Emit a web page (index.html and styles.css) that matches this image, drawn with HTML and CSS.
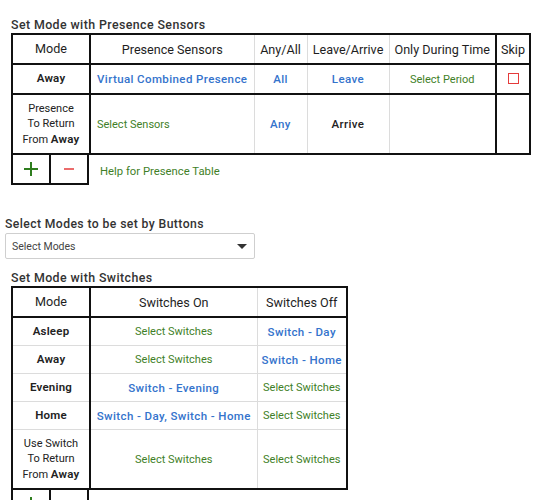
FILE: index.html
```html
<!DOCTYPE html>
<html lang="en">
<head>
  <meta charset="UTF-8">
  <title>Mode Manager</title>
  <link rel="stylesheet" href="styles.css">
</head>
<body>
  <div class="section">
    <div class="section-title">Set Mode with Presence Sensors</div>
    <table class="grid presence">
      <colgroup>
        <col style="width:78px">
        <col style="width:164px">
        <col style="width:53px">
        <col style="width:82px">
        <col style="width:107px">
        <col style="width:34px">
      </colgroup>
      <tr class="head">
        <th class="mode-col">Mode</th>
        <th class="soft">Presence Sensors</th>
        <th class="soft">Any/All</th>
        <th class="soft">Leave/Arrive</th>
        <th>Only During Time</th>
        <th class="skip-col">Skip</th>
      </tr>
      <tr class="row-hard">
        <td class="mode-col mode-name">Away</td>
        <td class="soft left link">Virtual Combined Presence</td>
        <td class="soft link">All</td>
        <td class="soft link">Leave</td>
        <td class="pick">Select Period</td>
        <td class="skip-col"><span class="checkbox"></span></td>
      </tr>
      <tr class="row-tall">
        <td class="mode-col">Presence<br>To Return<br>From <b>Away</b></td>
        <td class="soft left pick">Select Sensors</td>
        <td class="soft link">Any</td>
        <td class="soft plain">Arrive</td>
        <td></td>
        <td class="skip-col"></td>
      </tr>
    </table>
    <div class="add-row">
      <div class="btn-pair">
        <span class="btn plus">
          <svg width="16" height="16" viewBox="0 0 16 16"><path d="M8 1v14M1 8h14" stroke="#2e7d1e" stroke-width="2" fill="none"/></svg>
        </span>
        <span class="btn minus">
          <svg width="12" height="4" viewBox="0 0 12 4"><path d="M1 2h10" stroke="#e53b3b" stroke-width="1.5" fill="none"/></svg>
        </span>
      </div>
      <span class="help">Help for Presence Table</span>
    </div>
  </div>

  <div class="buttons-block">
    <div class="field-label">Select Modes to be set by Buttons</div>
    <div class="select">
      <span>Select Modes</span>
      <span class="caret"></span>
    </div>
  </div>

  <div class="section">
    <div class="section-title">Set Mode with Switches</div>
    <table class="grid switches">
      <colgroup>
        <col style="width:78px">
        <col style="width:167px">
        <col style="width:90px">
      </colgroup>
      <tr class="head">
        <th class="mode-col">Mode</th>
        <th class="soft">Switches On</th>
        <th>Switches Off</th>
      </tr>
      <tr class="row-soft">
        <td class="mode-col mode-name">Asleep</td>
        <td class="soft pick">Select Switches</td>
        <td class="link">Switch - Day</td>
      </tr>
      <tr class="row-soft">
        <td class="mode-col mode-name">Away</td>
        <td class="soft pick">Select Switches</td>
        <td class="link">Switch - Home</td>
      </tr>
      <tr class="row-soft">
        <td class="mode-col mode-name">Evening</td>
        <td class="soft link">Switch - Evening</td>
        <td class="pick">Select Switches</td>
      </tr>
      <tr class="row-soft">
        <td class="mode-col mode-name">Home</td>
        <td class="soft link">Switch - Day, Switch - Home</td>
        <td class="pick">Select Switches</td>
      </tr>
      <tr class="row-tall row-hard">
        <td class="mode-col">Use Switch<br>To Return<br>From <b>Away</b></td>
        <td class="soft pick">Select Switches</td>
        <td class="pick">Select Switches</td>
      </tr>
    </table>
    <div class="add-row">
      <div class="btn-pair">
        <span class="btn plus">
          <svg width="16" height="16" viewBox="0 0 16 16"><path d="M8 1v14M1 8h14" stroke="#2e7d1e" stroke-width="2" fill="none"/></svg>
        </span>
        <span class="btn minus">
          <svg width="12" height="4" viewBox="0 0 12 4"><path d="M1 2h10" stroke="#e53b3b" stroke-width="1.5" fill="none"/></svg>
        </span>
      </div>
    </div>
  </div>
</body>
</html>
```

FILE: styles.css
```css
html, body {
  margin: 0;
  padding: 0;
  background-color: white;
}

body {
  padding: 15px 5px 0 5px;
  font-family: Roboto, "Liberation Sans", sans-serif;
  color: #222;
  font-size: 12px;
}

.section {
  padding-left: 6px;
}

.section-title {
  font-size: 12.4px;
  font-weight: 500;
  letter-spacing: 0.4px;
  color: #333;
  height: 18px;
  line-height: 20px;
}

.grid {
  border-collapse: collapse;
  table-layout: fixed;
  border: 2px solid #111;
}

.presence {
  width: 520px;
}

.switches {
  width: 337px;
}

.grid th,
.grid td {
  padding: 0 2px;
  text-align: center;
  border: 1px solid #dcdcdc;
  border-top: none;
  border-bottom: none;
}

.grid th {
  font-weight: 400;
  font-size: 12.6px;
  color: #1e1e1e;
  height: 28px;
  border-bottom: 2px solid #111;
  white-space: nowrap;
}

.grid td {
  height: 27px;
  font-size: 11px;
}

.presence .row-hard td {
  height: 28px;
}

.grid .mode-col {
  border-right: 2px solid #111;
  line-height: 15.5px;
  font-size: 11px;
}

.grid th.mode-col {
  font-size: 12.6px;
}

.grid .skip-col {
  border-left: 2px solid #111;
}

.grid .left {
  text-align: left;
  padding-left: 6px;
}

.row-hard td {
  border-bottom: 2px solid #111;
}

.row-soft td {
  border-bottom: 1px solid #dcdcdc;
}

.grid .row-tall td {
  height: 58px;
}

.grid .mode-name,
.grid b {
  font-size: 11.5px;
  font-weight: 600;
  letter-spacing: 0.2px;
}

.grid .link {
  color: #3473cc;
  font-size: 11.5px;
  font-weight: 500;
  letter-spacing: 0.4px;
  white-space: nowrap;
}

.pick {
  color: #3f7f28;
  white-space: nowrap;
}

.grid .plain {
  font-size: 11.5px;
  font-weight: 500;
  letter-spacing: 0.4px;
}

.checkbox {
  display: inline-block;
  width: 9px;
  height: 9px;
  border: 1.5px solid #e53b3b;
  vertical-align: middle;
  margin-top: -3px;
}

.add-row {
  display: flex;
  align-items: center;
  height: 30px;
}

.btn-pair {
  display: flex;
  width: 78px;
  height: 30px;
  box-sizing: border-box;
  border: 2px solid #111;
  border-top: none;
}

.btn {
  flex: 1;
  display: flex;
  align-items: center;
  justify-content: center;
}

.plus {
  border-right: 2px solid #111;
}

.help {
  color: #3f7f28;
  margin-left: 11px;
  font-size: 11.3px;
  padding-top: 2px;
}

.buttons-block {
  margin-top: 32px;
  margin-bottom: 9px;
}

.field-label {
  font-size: 12.2px;
  font-weight: 500;
  letter-spacing: 0.4px;
  color: #333;
  height: 16px;
}

.select {
  display: flex;
  align-items: center;
  justify-content: space-between;
  width: 250px;
  height: 26px;
  box-sizing: border-box;
  border: 1px solid #cfcfcf;
  border-radius: 2px;
  padding: 0 7px 0 6px;
  font-size: 10.5px;
  color: #444;
}

.caret {
  width: 0;
  height: 0;
  border-left: 5px solid transparent;
  border-right: 5px solid transparent;
  border-top: 5px solid #333;
}
```
